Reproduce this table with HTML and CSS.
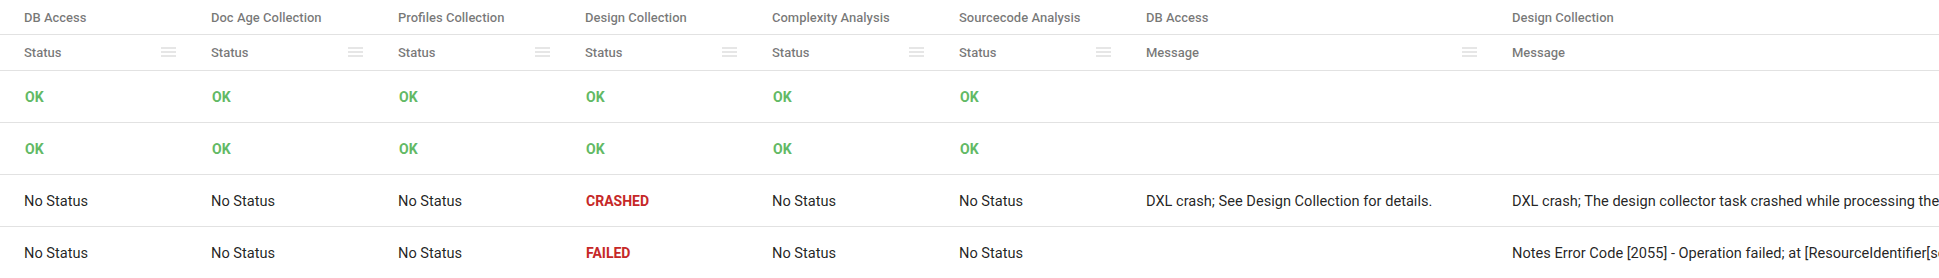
FILE: index.html
```html
<!DOCTYPE html>
<html>
<head>
<meta charset="utf-8">
<link rel="stylesheet" href="styles.css">
</head>
<body>
<div class="grid">
  <div class="row head">
    <div class="cell">DB Access</div>
    <div class="cell">Doc Age Collection</div>
    <div class="cell">Profiles Collection</div>
    <div class="cell">Design Collection</div>
    <div class="cell">Complexity Analysis</div>
    <div class="cell">Sourcecode Analysis</div>
    <div class="cell">DB Access</div>
    <div class="cell">Design Collection</div>
  </div>
  <div class="row head sub">
    <div class="cell"><span>Status</span><i class="menu"></i></div>
    <div class="cell"><span>Status</span><i class="menu"></i></div>
    <div class="cell"><span>Status</span><i class="menu"></i></div>
    <div class="cell"><span>Status</span><i class="menu"></i></div>
    <div class="cell"><span>Status</span><i class="menu"></i></div>
    <div class="cell"><span>Status</span><i class="menu"></i></div>
    <div class="cell"><span>Message</span><i class="menu"></i></div>
    <div class="cell"><span>Message</span></div>
  </div>
  <div class="row data">
    <div class="cell ok">OK</div>
    <div class="cell ok">OK</div>
    <div class="cell ok">OK</div>
    <div class="cell ok">OK</div>
    <div class="cell ok">OK</div>
    <div class="cell ok">OK</div>
    <div class="cell"></div>
    <div class="cell"></div>
  </div>
  <div class="row data">
    <div class="cell ok">OK</div>
    <div class="cell ok">OK</div>
    <div class="cell ok">OK</div>
    <div class="cell ok">OK</div>
    <div class="cell ok">OK</div>
    <div class="cell ok">OK</div>
    <div class="cell"></div>
    <div class="cell"></div>
  </div>
  <div class="row data">
    <div class="cell">No Status</div>
    <div class="cell">No Status</div>
    <div class="cell">No Status</div>
    <div class="cell bad">CRASHED</div>
    <div class="cell">No Status</div>
    <div class="cell">No Status</div>
    <div class="cell">DXL crash; See Design Collection for details.</div>
    <div class="cell">DXL crash; The design collector task crashed while processing the database design.</div>
  </div>
  <div class="row data last">
    <div class="cell">No Status</div>
    <div class="cell">No Status</div>
    <div class="cell">No Status</div>
    <div class="cell bad">FAILED</div>
    <div class="cell">No Status</div>
    <div class="cell">No Status</div>
    <div class="cell"></div>
    <div class="cell">Notes Error Code [2055] - Operation failed; at [ResourceIdentifier[server=, path=]]</div>
  </div>
</div>
</body>
</html>
```

FILE: styles.css
```css
html, body {
  margin: 0;
  padding: 0;
  background: #fff;
  overflow: hidden;
}
body {
  font-family: Roboto, "Liberation Sans", sans-serif;
  color: rgba(0, 0, 0, 0.87);
}
.grid {
  width: 2300px;
}
.row {
  display: grid;
  grid-template-columns: repeat(6, 187px) 366px 800px;
  border-bottom: 1px solid #e2e2e2;
}
.row.last {
  border-bottom: none;
}
.cell {
  display: flex;
  align-items: center;
  padding-left: 24px;
  white-space: nowrap;
  overflow: hidden;
}
.head .cell {
  height: 34px;
  font-size: 13px;
  font-weight: 500;
  color: rgba(0, 0, 0, 0.54);
}
.head.sub .cell {
  height: 35px;
  justify-content: space-between;
  padding-right: 11px;
}
.menu {
  display: block;
  width: 15px;
  height: 2px;
  margin-top: -1px;
  background: #e6e6e6;
  box-shadow: 0 4px 0 #e6e6e6, 0 8px 0 #e6e6e6;
  transform: translateY(-4px);
}
.data .cell {
  height: 51px;
  font-size: 14.6px;
}
.data .cell.ok {
  font-size: 14px;
  font-weight: 700;
  color: #62b965;
  padding-left: 25px;
}
.data .cell.bad {
  font-size: 14px;
  font-weight: 700;
  color: #c62828;
  padding-left: 25px;
}
```
